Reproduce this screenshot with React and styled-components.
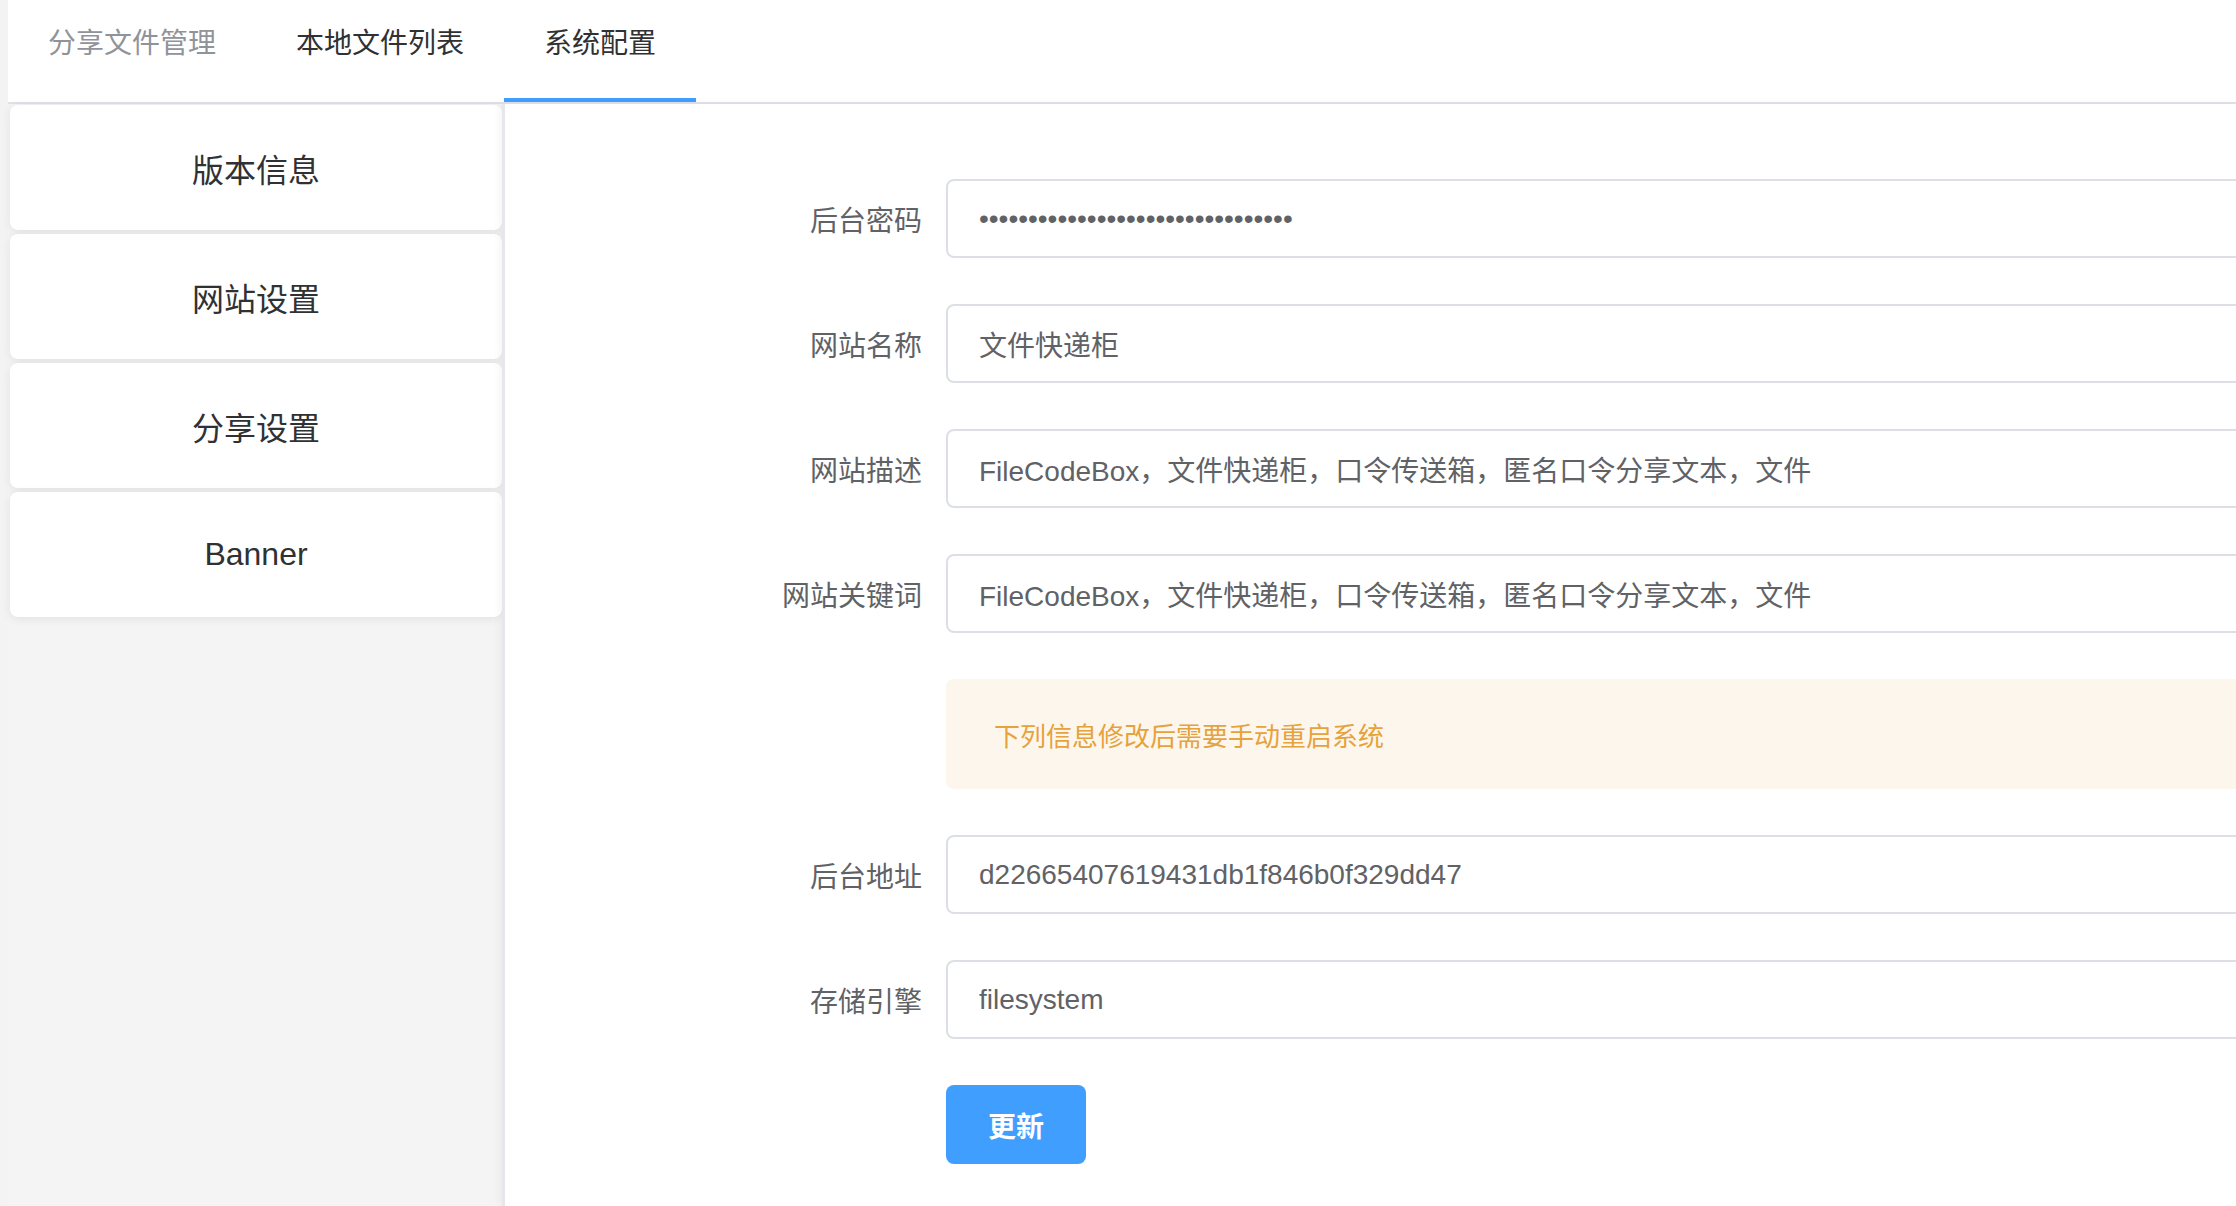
import React from "react";
import styled, { createGlobalStyle } from "styled-components";

const GlobalStyle = createGlobalStyle`
  html, body {
    margin: 0;
    padding: 0;
    background: #f3f3f4;
    overflow: hidden;
  }
  body {
    font-family: "Liberation Sans", "Noto Sans CJK SC", sans-serif;
  }
  * {
    box-sizing: border-box;
  }
`;

const tabs = [
  { label: "分享文件管理", muted: true },
  { label: "本地文件列表" },
  { label: "系统配置", active: true },
];

const menu = ["版本信息", "网站设置", "分享设置", "Banner"];

const fields = [
  { label: "后台密码", value: "d22665407619431db1f846b0f329dd47", type: "password" },
  { label: "网站名称", value: "文件快递柜" },
  { label: "网站描述", value: "FileCodeBox，文件快递柜，口令传送箱，匿名口令分享文本，文件" },
  { label: "网站关键词", value: "FileCodeBox，文件快递柜，口令传送箱，匿名口令分享文本，文件" },
];

const restartFields = [
  { label: "后台地址", value: "d22665407619431db1f846b0f329dd47" },
  { label: "存储引擎", value: "filesystem" },
];

function Field({ label, value, type = "text" }) {
  return (
    <>
      <Label>{label}</Label>
      <Input type={type} defaultValue={value} />
    </>
  );
}

function App() {
  return (
    <StyledPage>
      <GlobalStyle />
      <TabBar>
        {tabs.map((t) => (
          <Tab key={t.label} $active={t.active} $muted={t.muted}>
            {t.label}
          </Tab>
        ))}
      </TabBar>
      <Body>
        <Sidebar>
          {menu.map((m) => (
            <MenuCard key={m}>{m}</MenuCard>
          ))}
        </Sidebar>
        <Content>
          <Form>
            {fields.map((f) => (
              <Field key={f.label} {...f} />
            ))}
            <Alert>下列信息修改后需要手动重启系统</Alert>
            {restartFields.map((f) => (
              <Field key={f.label} {...f} />
            ))}
            <SubmitButton>更新</SubmitButton>
          </Form>
        </Content>
      </Body>
    </StyledPage>
  );
}

export default App;

/****************** styled component ***************/

const StyledPage = styled.div`
  display: flex;
  flex-direction: column;
  height: 100vh;
  margin-left: 8px;
  background: #fff;
`;

const TabBar = styled.nav`
  display: flex;
  height: 104px;
  border-bottom: 2px solid #dfe0e8;
  background: #fff;
`;

const Tab = styled.div`
  height: 102px;
  padding: 0 40px;
  line-height: 88px;
  font-size: 28px;
  color: ${(p) => (p.$muted ? "#909399" : "#303133")};
  border-bottom: 4px solid ${(p) => (p.$active ? "#409eff" : "transparent")};
  white-space: nowrap;
`;

const Body = styled.div`
  display: flex;
  flex: 1;
  min-height: 0;
`;

const Sidebar = styled.aside`
  display: flex;
  flex-direction: column;
  gap: 4px;
  width: 494px;
  padding: 1px 0 0 2px;
  background: #f4f4f5;
`;

const MenuCard = styled.div`
  display: flex;
  align-items: center;
  justify-content: center;
  height: 125px;
  background: #fff;
  border-radius: 8px;
  box-shadow: 0 2px 10px rgba(0, 0, 0, 0.08);
  font-size: 32px;
  color: #303133;
`;

const Content = styled.main`
  flex: 1;
  min-width: 0;
  overflow: hidden;
  background: #fff;
  border-left: 3px solid #e6e6ec;
  box-shadow: -3px 0 8px rgba(0, 0, 0, 0.04);
  padding: 75px 0 0 219px;
`;

const Form = styled.form`
  display: grid;
  grid-template-columns: 222px 1500px;
  row-gap: 46px;
  align-items: center;
`;

const Label = styled.label`
  padding-right: 24px;
  text-align: right;
  font-size: 28px;
  color: #606266;
  white-space: nowrap;
`;

const Input = styled.input`
  height: 79px;
  padding: 0 31px;
  border: 2px solid #dcdfe6;
  border-radius: 8px;
  font-family: "Liberation Sans", "Noto Sans CJK SC", sans-serif;
  font-size: 28px;
  color: #606266;
  background: #fff;
  outline: none;
`;

const Alert = styled.div`
  grid-column: 2;
  display: flex;
  align-items: center;
  height: 110px;
  padding-left: 48px;
  background: #fdf6ec;
  border-radius: 8px;
  font-size: 26px;
  color: #e6a23c;
`;

const SubmitButton = styled.button`
  grid-column: 2;
  width: 140px;
  height: 79px;
  border: none;
  border-radius: 8px;
  background: #409eff;
  color: #fff;
  font-family: "Liberation Sans", "Noto Sans CJK SC", sans-serif;
  font-size: 28px;
  font-weight: 700;
`;
